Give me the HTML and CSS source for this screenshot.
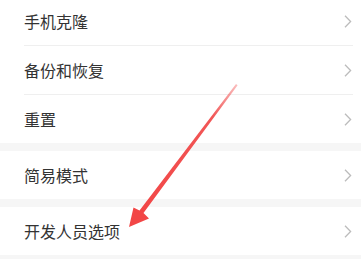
FILE: index.html
```html
<!DOCTYPE html>
<html lang="zh-CN">
<head>
    <meta charset="UTF-8">
    <meta name="viewport" content="width=device-width, initial-scale=1.0">
    <title>系统</title>
    <link rel="stylesheet" href="styles.css">
</head>
<body>
    <div class="screen">
        <div class="group first">
            <div class="row"><span class="label">手机克隆</span><svg class="chevron" viewBox="0 0 8 13"><polyline points="1,0.8 6.6,6.5 1,12.2"/></svg></div>
            <div class="row"><span class="label">备份和恢复</span><svg class="chevron" viewBox="0 0 8 13"><polyline points="1,0.8 6.6,6.5 1,12.2"/></svg></div>
            <div class="row"><span class="label">重置</span><svg class="chevron" viewBox="0 0 8 13"><polyline points="1,0.8 6.6,6.5 1,12.2"/></svg></div>
        </div>
        <div class="group">
            <div class="row"><span class="label">简易模式</span><svg class="chevron" viewBox="0 0 8 13"><polyline points="1,0.8 6.6,6.5 1,12.2"/></svg></div>
        </div>
        <div class="group">
            <div class="row"><span class="label">开发人员选项</span><svg class="chevron" viewBox="0 0 8 13"><polyline points="1,0.8 6.6,6.5 1,12.2"/></svg></div>
        </div>

        <svg class="arrow" width="361" height="259" viewBox="0 0 361 259">
            <defs>
                <linearGradient id="fade" x1="236" y1="84" x2="140" y2="212" gradientUnits="userSpaceOnUse">
                    <stop offset="0" stop-color="#f04444" stop-opacity="0.35"/>
                    <stop offset="0.25" stop-color="#f04444" stop-opacity="0.9"/>
                    <stop offset="1" stop-color="#f24646"/>
                </linearGradient>
            </defs>
            <polygon points="236,84 237.6,85.2 143.5,213 149,218.5 129,227 133.5,207.5 139.5,210.5" fill="url(#fade)"/>
        </svg>
    </div>
</body>
</html>
```

FILE: styles.css
```css
body, html {
    margin: 0;
    padding: 0;
    background-color: #fff;
    font-family: "Noto Sans CJK SC", "Noto Sans", sans-serif;
    overflow: hidden;
}

.screen {
    position: relative;
    width: 361px;
    height: 259px;
    overflow: hidden;
    background-color: #f6f6f6;
}

.group {
    background-color: #fff;
    margin-bottom: 8px;
}

.group.first {
    margin-top: -3px;
}

.row {
    height: 48px;
    display: flex;
    align-items: center;
    justify-content: space-between;
    padding: 0 9px 0 24px;
    position: relative;
}

.row + .row::before {
    content: "";
    position: absolute;
    top: -1px;
    left: 24px;
    right: 8px;
    height: 1px;
    background-color: #efefef;
}

.row + .row {
    margin-top: 1px;
}

.label {
    font-size: 16px;
    color: #333;
    line-height: 1;
}

.chevron {
    width: 8px;
    height: 13px;
    fill: none;
    stroke: #bcbcbc;
    stroke-width: 1.3;
}

.arrow {
    position: absolute;
    top: 0;
    left: 0;
}
```
